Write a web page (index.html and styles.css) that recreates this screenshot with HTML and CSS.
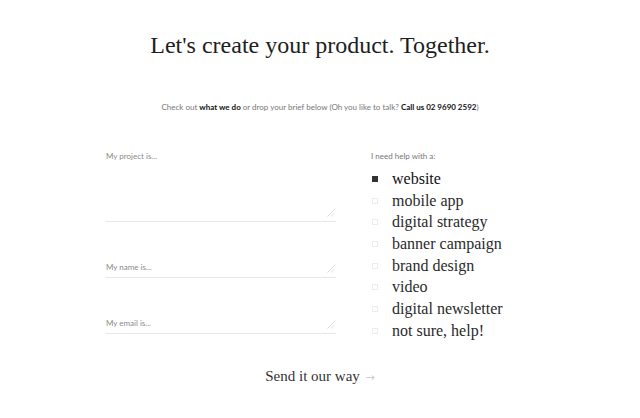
FILE: index.html
```html
<!DOCTYPE html>
<html>
<head>
<meta charset="utf-8">
<link rel="stylesheet" href="styles.css">
</head>
<body>
<main class="page">
  <h1 class="title">Let's create your product. Together.</h1>
  <p class="intro">Check out <b>what we do</b> or drop your brief below (Oh you like to talk? <b>Call us 02 9690 2592</b>)</p>
  <form class="form">
    <div class="fields">
      <div class="field-wrap">
        <textarea class="field field-project" placeholder="My project is..."></textarea>
        <svg class="grip" width="8" height="8" viewBox="0 0 8 8"><path d="M7.5 0.5 L0.5 7.5 M7.5 4 L4 7.5" stroke="#d2d2d2" stroke-width="0.8" fill="none"/></svg>
      </div>
      <div class="field-wrap">
        <textarea class="field field-line" placeholder="My name is..."></textarea>
        <svg class="grip" width="8" height="8" viewBox="0 0 8 8"><path d="M7.5 0.5 L0.5 7.5 M7.5 4 L4 7.5" stroke="#d2d2d2" stroke-width="0.8" fill="none"/></svg>
      </div>
      <div class="field-wrap">
        <textarea class="field field-line" placeholder="My email is..."></textarea>
        <svg class="grip" width="8" height="8" viewBox="0 0 8 8"><path d="M7.5 0.5 L0.5 7.5 M7.5 4 L4 7.5" stroke="#d2d2d2" stroke-width="0.8" fill="none"/></svg>
      </div>
    </div>
    <div class="help">
      <p class="help-label">I need help with a:</p>
      <ul class="options">
        <li class="option checked"><span class="box"></span>website</li>
        <li class="option"><span class="box"></span>mobile app</li>
        <li class="option"><span class="box"></span>digital strategy</li>
        <li class="option"><span class="box"></span>banner campaign</li>
        <li class="option"><span class="box"></span>brand design</li>
        <li class="option"><span class="box"></span>video</li>
        <li class="option"><span class="box"></span>digital newsletter</li>
        <li class="option"><span class="box"></span>not sure, help!</li>
      </ul>
    </div>
  </form>
  <div class="send">
    <button class="send-btn" type="button">Send it our way <span class="arrow">&#8594;</span></button>
  </div>
</main>
</body>
</html>
```

FILE: styles.css
```css
html, body {
  margin: 0;
  padding: 0;
  background: #fff;
}
body {
  font-family: "Lato", "Liberation Sans", sans-serif;
  color: #222;
}
.page {
  width: 640px;
  padding-top: 29px;
}
.title {
  margin: 0;
  text-align: center;
  font-family: "Liberation Serif", serif;
  font-weight: 400;
  font-size: 24px;
  line-height: 32px;
  color: #1e1e1e;
}
.intro {
  margin: 40px 0 0;
  text-align: center;
  font-size: 8px;
  line-height: 12px;
  color: #777;
}
.intro b {
  color: #111;
  font-weight: 700;
}
.form {
  display: grid;
  grid-template-columns: 231px 164px;
  column-gap: 35px;
  width: 430px;
  margin: 32px auto 0;
}
.fields {
  display: flex;
  flex-direction: column;
  gap: 34px;
}
.field-wrap {
  position: relative;
}
.field {
  display: block;
  width: 231px;
  box-sizing: border-box;
  border: none;
  border-bottom: 1px solid #e8e8e8;
  padding: 5px 0 0 1px;
  font-family: "Lato", "Liberation Sans", sans-serif;
  font-size: 8px;
  line-height: 12px;
  color: #333;
  outline: none;
  background: transparent;
  resize: none;
}
.field::placeholder {
  color: #8a8a8a;
}
.field-project {
  height: 77px;
}
.field-line {
  height: 22px;
}
.grip {
  position: absolute;
  right: 1px;
  bottom: 5px;
}
.help-label {
  margin: 5px 0 0;
  font-size: 8px;
  line-height: 12px;
  color: #777;
}
.options {
  list-style: none;
  margin: 6px 0 0;
  padding: 0;
}
.option {
  display: flex;
  align-items: center;
  height: 21.7px;
  font-family: "Liberation Serif", serif;
  font-size: 16px;
  color: #2a2a2a;
}
.box {
  width: 4px;
  height: 4px;
  border: 1px solid #ececec;
  margin: 0 14px 0 1px;
  flex: none;
}
.option.checked .box {
  background: #333;
  border-color: #333;
}
.option.checked {
  color: #111;
}
.send {
  text-align: center;
  margin-top: 23px;
}
.send-btn {
  border: none;
  background: none;
  padding: 0;
  font-family: "Liberation Serif", serif;
  font-size: 15px;
  color: #333;
  cursor: pointer;
}
.arrow {
  color: #ccc;
  margin-left: 2px;
  font-family: "DejaVu Sans", sans-serif;
  font-size: 11px;
}
```
